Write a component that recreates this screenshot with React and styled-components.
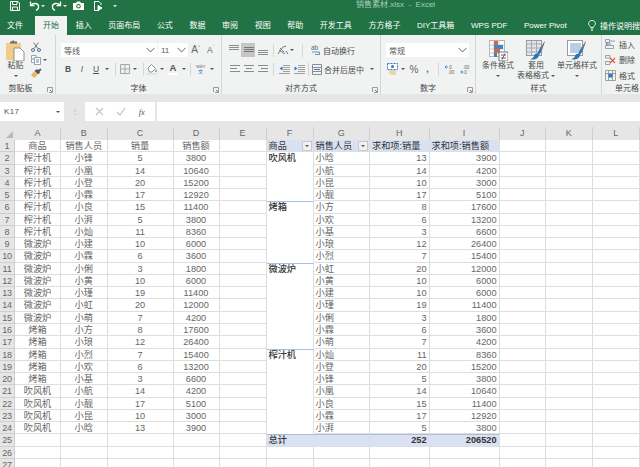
import React from "react";
import styled, { createGlobalStyle } from "styled-components";

const FONT = `"Liberation Sans", "Noto Sans CJK SC", sans-serif`;
const GREEN = "#217346";
const RIBBON = "#f0f3f2";

const GlobalStyle = createGlobalStyle`
  html, body { margin: 0; padding: 0; background: #fff; }
  body { font-family: ${FONT}; overflow: hidden; }
`;

const Page = styled.div`
  width: 640px;
  height: 467px;
  overflow: hidden;
  display: flex;
  flex-direction: column;
`;

const TitleBar = styled.div`
  height: 16px;
  background: ${GREEN};
  display: flex;
  align-items: flex-start;
  flex: none;
`;

const Qat = styled.div`
  width: 356px;
  height: 11px;
  display: flex;
  align-items: center;
  padding-left: 10px;
  box-sizing: border-box;
  flex: none;
`;

const QatSlot = styled.span`
  display: flex;
  align-items: center;
  width: ${(p) => p.$w}px;
  flex: none;
`;

const DocTitle = styled.div`
  font-size: 8px;
  line-height: 9px;
  color: #a9cdb9;
  white-space: pre;
`;

const TabBar = styled.div`
  height: 19px;
  background: ${GREEN};
  display: flex;
  flex: none;
  white-space: nowrap;
`;

const Tab = styled.div`
  padding: 0 8.3px;
  font-size: 8px;
  line-height: 19px;
  color: ${(p) => (p.$active ? GREEN : "#fff")};
  background: ${(p) => (p.$active ? RIBBON : "transparent")};
  flex: none;
  &:first-child {
    padding-left: 7px;
    margin-right: 3.5px;
  }
`;

const TellMe = styled.div`
  display: flex;
  align-items: center;
  gap: 4px;
  margin-left: 13px;
  font-size: 8px;
  color: #fff;
`;

const Ribbon = styled.div`
  height: 59px;
  background: ${RIBBON};
  display: flex;
  flex: none;
  color: #4a4a4a;
  font-size: 8px;
  overflow: hidden;
`;

const Group = styled.div`
  position: relative;
  width: ${(p) => p.$w}px;
  flex: none;
  box-sizing: border-box;
  border-right: 1px solid ${(p) => (p.$last ? "transparent" : "#d3d8d5")};
  display: flex;
  flex-direction: column;
`;

const GroupBody = styled.div`
  height: 49px;
  padding-left: ${(p) => p.$pad || 0}px;
  padding-top: ${(p) => p.$top ?? 8}px;
  box-sizing: border-box;
  display: flex;
  flex-direction: ${(p) => (p.$row ? "row" : "column")};
  gap: ${(p) => (p.$row ? 0 : 5)}px;
`;

const GroupLabel = styled.div`
  text-align: center;
  font-size: 8px;
  line-height: 10px;
  color: #444;
  white-space: nowrap;
`;

const Launcher = styled.svg`
  position: absolute;
  right: 2px;
  bottom: 1px;
`;

const ToolRow = styled.div`
  display: flex;
  align-items: center;
  height: 14px;
  white-space: nowrap;
`;

const Slot = styled.span`
  display: flex;
  align-items: center;
  justify-content: center;
  width: ${(p) => p.$w}px;
  height: 14px;
  flex: none;
  background: ${(p) => (p.$on ? "#c6c6c6" : "transparent")};
`;

const Caret = styled.i`
  display: block;
  width: 0;
  height: 0;
  border-left: 2px solid transparent;
  border-right: 2px solid transparent;
  border-top: 2px solid #555;
`;

const Sep = styled.i`
  display: block;
  width: 1px;
  height: 13px;
  background: #d3d8d5;
`;

const SelectBox = styled.div`
  width: ${(p) => p.$w}px;
  height: 14px;
  flex: none;
  background: #fff;
  box-sizing: border-box;
  padding: 0 2px 0 3px;
  display: flex;
  align-items: center;
  justify-content: space-between;
  font-size: 8px;
  color: #555;
  margin-right: ${(p) => p.$mr || 0}px;
`;

const WrapText = styled.span`
  font-size: 8px;
  margin-left: 1px;
`;

const PasteColumn = styled.div`
  width: 31px;
  display: flex;
  flex-direction: column;
  align-items: center;
  font-size: 8px;
  line-height: 10px;
`;

const PasteCaret = styled.span`
  display: flex;
  align-items: center;
  justify-content: center;
  height: 9px;
`;

const ClipTools = styled.div`
  display: flex;
  flex-direction: column;
  gap: 3px;
  padding-top: 2px;
`;

const ClipRow = styled.div`
  display: flex;
  align-items: center;
  height: 10px;
`;

const BigButton = styled.div`
  width: ${(p) => p.$w}px;
  flex: none;
  display: flex;
  flex-direction: column;
  align-items: center;
  font-size: 8px;
  line-height: 10px;
  white-space: nowrap;
`;

const BigIcon = styled.div`
  height: 21px;
`;

const InlineCaret = styled.span`
  display: inline-flex;
  align-items: center;
  justify-content: center;
  height: 10px;
  gap: 2px;
`;

const CellsList = styled.div`
  display: flex;
  flex-direction: column;
  gap: 1px;
  padding: 2px 0 0 3px;
`;

const CellsItem = styled.div`
  display: flex;
  align-items: center;
  height: 14.5px;
  gap: 3px;
  white-space: nowrap;
`;

const CellsLabel = styled(GroupLabel)`
  text-align: left;
  padding-left: 13px;
`;

const ClipLabel = styled(GroupLabel)`
  padding-right: 14px;
`;

const FormulaArea = styled.div`
  height: 33px;
  flex: none;
  background: #e6e6e6;
  display: flex;
  align-items: flex-start;
  padding-top: 8px;
  box-sizing: border-box;
`;

const NameBox = styled.div`
  width: 64px;
  height: 19px;
  background: #fff;
  box-sizing: border-box;
  padding: 0 4px;
  display: flex;
  align-items: center;
  justify-content: space-between;
  font-size: 8px;
  color: #555;
  letter-spacing: 0.3px;
`;

const Grip = styled.div`
  width: 21px;
  height: 19px;
  display: flex;
  align-items: center;
  justify-content: center;
  color: #a8a8a8;
  font-size: 8px;
  flex: none;
`;

const FxBox = styled.div`
  width: 70px;
  height: 19px;
  background: #fff;
  flex: none;
  display: flex;
  align-items: center;
  justify-content: space-around;
  padding: 0 4px;
  box-sizing: border-box;
  margin-right: 2px;
`;

const FxText = styled.span`
  font: italic 8.5px "Liberation Serif", serif;
  color: #555;
`;

const FormulaInput = styled.div`
  flex: 1;
  height: 19px;
  background: #fff;
`;

const Sheet = styled.div`
  display: grid;
  grid-template-columns: 15px 46px 46.5px 66px 46px 47px 47px 56.5px 59.5px 70px 46.5px 46.5px 47.5px;
  grid-template-rows: 13px;
  grid-auto-rows: 12.27px;
  flex: 1;
  font-size: 9.2px;
  color: #666;
  overflow: hidden;
`;

const Corner = styled.div`
  background: #e6e6e6;
  display: flex;
  align-items: flex-end;
  justify-content: flex-end;
  padding: 0 2px 2px 0;
  box-sizing: border-box;
`;

const ColHead = styled.div`
  background: #e6e6e6;
  border-right: 1px solid #cfcfcf;
  box-sizing: border-box;
  text-align: center;
  font-size: 9px;
  line-height: 13px;
  color: #666;
`;

const RowHead = styled.div`
  background: #e6e6e6;
  border-right: 1px solid #cfcfcf;
  border-bottom: 1px solid #cfcfcf;
  box-sizing: border-box;
  text-align: center;
  font-size: 9px;
  line-height: 12px;
  color: #666;
  letter-spacing: -0.2px;
`;

const Cell = styled.div`
  box-sizing: border-box;
  border-right: 1px solid #dcdfde;
  border-bottom: 1px solid ${(p) => (p.$noLine ? "transparent" : "#dcdfde")};
  border-top: ${(p) => (p.$groupTop ? "1px solid #a9bfe0" : "none")};
  background: ${(p) => (p.$fill ? "#d9e1f2" : "#fff")};
  text-align: ${(p) => p.$align || "center"};
  padding: 0 2px;
  line-height: ${(p) => (p.$groupTop ? 11 : 12)}px;
  white-space: nowrap;
  overflow: hidden;
  color: ${(p) => (p.$strong ? "#333" : "#666")};
  font-weight: ${(p) => p.$weight || 400};
  grid-column: ${(p) => (p.$span ? `span ${p.$span}` : "auto")};
  display: ${(p) => (p.$filter ? "flex" : "block")};
  justify-content: space-between;
  align-items: center;
`;

const FilterButton = styled.span`
  width: 10px;
  height: 10px;
  background: #f1f1f1;
  border: 1px solid #c9c9c9;
  box-sizing: border-box;
  display: flex;
  align-items: center;
  justify-content: center;
  flex: none;
  margin-right: -1px;
`;

const FontColor = styled.span`
  display: inline-block;
  font-size: 9.5px;
  line-height: 10px;
  font-weight: 700;
  color: #555;
  border-bottom: 2px solid #fff;
  padding: 0 2px;
`;

const BoldMark = styled.span`
  font-size: 8.5px;
  font-weight: ${(p) => (p.$b ? 700 : 400)};
  font-style: ${(p) => (p.$i ? "italic" : "normal")};
  text-decoration: ${(p) => (p.$u ? "underline" : "none")};
  color: #555;
`;

const GrowA = styled.span`
  font-size: ${(p) => p.$s}px;
  color: #666;
  line-height: 10px;
  display: flex;
  align-items: flex-start;
`;

const Tiny = styled.sup`
  font-size: 4px;
  line-height: 4px;
  color: #2b78c5;
`;

const WenIcon = styled.span`
  display: flex;
  flex-direction: column;
  align-items: center;
  font-size: 5px;
  line-height: 5.5px;
  color: #2b78c5;
`;

const WenTop = styled.span`
  color: #777;
`;

const Percent = styled.span`
  font-size: 10px;
  color: #666;
`;

const Comma = styled.span`
  font-size: 9px;
  font-weight: 700;
  color: #666;
`;

const Chevron = () => (
  <svg width="9" height="6" viewBox="0 0 9 6">
    <path d="M.5 .8 4.5 5 8.5 .8" fill="none" stroke="#666" />
  </svg>
);

const Corner4 = () => (
  <Launcher width="6" height="6" viewBox="0 0 6 6">
    <path d="M.5 5V.5H5.5V5.5H2" fill="none" stroke="#9a9a9a" />
    <path d="M3 3 5 5" stroke="#777" />
  </Launcher>
);

const Lines = ({ rows, color = "#8c8c8c", w = 11 }) => (
  <svg width={w} height="12" viewBox={`0 0 ${w} 12`}>
    {rows.map(([x1, x2, y], i) => (
      <path key={i} d={`M${x1} ${y}H${x2}`} stroke={color} />
    ))}
  </svg>
);

const Indent = ({ flip }) => (
  <svg width="11" height="10" viewBox="0 0 11 10">
    <path d="M4 1.5H11M4 3.5H11M4 5.5H11M4 7.5H11M0 9.5H11" stroke="#8c8c8c" strokeWidth=".8" />
    <path d={flip ? "M3.5 2.5V6.5L.5 4.5Z" : "M.5 2.5V6.5L3.5 4.5Z"} fill="#2b78c5" />
  </svg>
);

const Save = () => (
  <svg width="10" height="10" viewBox="0 0 10 10" fill="none" stroke="#fff">
    <path d="M.5 .5H8L9.5 2V9.5H.5Z" />
    <path d="M2.5 .5V3.5H7V.5M2.5 9.5V6H7.5V9.5" />
  </svg>
);

const Undo = ({ flip }) => (
  <svg width="11" height="10" viewBox="0 0 11 10" fill="none" stroke="#fff" strokeWidth="1.3">
    <g transform={flip ? "matrix(-1 0 0 1 11 0)" : undefined}>
      <path d="M1.5 .5V4.5H5.5" />
      <path d="M1.8 4.3C4 1.6 9.6 1.8 9.6 5.6 9.6 7.6 8.4 8.8 7 9.4" />
    </g>
  </svg>
);

const Camera = () => (
  <svg width="11" height="9" viewBox="0 0 11 9">
    <path d="M0 2H3L4 .5H7L8 2H11V9H0Z" fill="#fff" />
    <circle cx="5.5" cy="5.3" r="2.2" fill={GREEN} />
    <circle cx="5.5" cy="5.3" r="1.2" fill="#fff" />
  </svg>
);

const QatDoc = () => (
  <svg width="11" height="10" viewBox="0 0 11 10" fill="none" stroke="#fff">
    <path d="M6 9.5H1.5V.5H6L8 2.5V4" />
    <path d="M5 4.5 9 7 5 9.5Z" fill="#fff" />
  </svg>
);

const QatCaret = () => (
  <svg width="6" height="10" viewBox="0 0 6 10">
    <path d="M0 4H4L2 6.2Z" fill="#d8e8df" />
  </svg>
);

const Bulb = () => (
  <svg width="8" height="11" viewBox="0 0 8 11" fill="none" stroke="#fff" strokeWidth=".9">
    <path d="M2.6 7.5C2.4 6 .6 5.4 .6 3.5 .6 1.7 2.1.5 4 .5S7.4 1.7 7.4 3.5C7.4 5.4 5.6 6 5.4 7.5Z" />
    <path d="M2.8 9H5.2M3.2 10.4H4.8" />
  </svg>
);

const PasteIcon = () => (
  <svg width="19" height="21" viewBox="0 0 19 21">
    <rect x="0" y="3" width="15" height="17" fill="#f1cd8c" />
    <path d="M4 3V1.5H6L7 0 8.5 1.5H11V3.5H4Z" fill="#6e6e6e" />
    <path d="M8 8H14L18 12V21H8Z" fill="#fff" stroke="#777" strokeWidth=".8" />
  </svg>
);

const Scissors = () => (
  <svg width="10" height="10" viewBox="0 0 10 10" fill="none" stroke="#54718f">
    <circle cx="2" cy="8" r="1.5" />
    <circle cx="8" cy="8" r="1.5" />
    <path d="M3 6.6 7.5 .5M7 6.6 2.5 .5" stroke="#777" />
  </svg>
);

const CopyIcon = () => (
  <svg width="10" height="10" viewBox="0 0 10 10" fill="#fff" stroke="#8c8c8c" strokeWidth=".8">
    <path d="M.5 .5H5V7.5H.5Z" />
    <path d="M3.5 2.5H9.5V9.5H3.5Z" />
    <path d="M2 3V5M5 5H8M5 7H8" stroke="#2b78c5" />
  </svg>
);

const Brush = () => (
  <svg width="11" height="10" viewBox="0 0 11 10">
    <path d="M0 7 3 3.5 6.5 6.5 3.5 10 1.5 8.5Z" fill="#e7b766" />
    <path d="M3.5 3 6 1 7 2 9.5 .5 10.5 1.5 8.5 4 9 5 6.8 6.3Z" fill="#555" />
  </svg>
);

const BordersIcon = () => (
  <svg width="10" height="10" viewBox="0 0 10 10" fill="none" stroke="#a6a6a6">
    <path d="M.5 .5H9.5V9.5H.5ZM5 .5V9.5M.5 5H9.5" />
  </svg>
);

const FillIcon = () => (
  <svg width="12" height="12" viewBox="0 0 12 12">
    <path d="M2 5 5.5 1.5 9.5 5.5 6 9H3.5Z" fill="#fff" stroke="#777" strokeWidth=".8" />
    <path d="M10 6.5C11 8 11 9 10 9S9 8 10 6.5Z" fill="#2b78c5" />
    <rect x="0" y="10" width="11" height="2" fill="#e4e4e4" />
  </svg>
);

const OrientIcon = () => (
  <svg width="12" height="11" viewBox="0 0 12 11" fill="none" stroke="#777">
    <path d="M1 9 6 2 9 1M3 3 7 7M2 5 8 9" />
    <path d="M9 6 11 9" stroke="#2b78c5" />
  </svg>
);

const WrapIcon = () => (
  <svg width="10" height="12" viewBox="0 0 10 12" fill="none">
    <text x="0" y="6" fontSize="6.5" fill="#666" fontFamily="Liberation Sans">ab</text>
    <path d="M1 8H8.5V10.5H4" stroke="#2b78c5" strokeWidth=".8" />
  </svg>
);

const MergeIcon = () => (
  <svg width="10" height="11" viewBox="0 0 10 11" fill="none" stroke="#8c8c8c">
    <path d="M.5 .5H9.5V10.5H.5ZM.5 3.5H9.5M.5 7.5H9.5" />
    <path d="M2 5.5H8" stroke="#2b78c5" />
  </svg>
);

const CurrencyIcon = () => (
  <svg width="11" height="12" viewBox="0 0 11 12">
    <rect x=".5" y=".5" width="10" height="6" fill="#fff" stroke="#2b78c5" strokeDasharray="2 1" />
    <circle cx="5.5" cy="3.5" r="1.5" fill="#2b78c5" />
    <path d="M2 8H9M2 10H9M4 12H9" stroke="#e7b766" />
  </svg>
);

const DecimalIcon = ({ top, bottom, left }) => (
  <svg width="10" height="11" viewBox="0 0 10 11">
    <text x="3" y="4.6" fontSize="4.6" fill="#666" fontFamily="Liberation Sans">{top}</text>
    <text x="3" y="10" fontSize="4.6" fill="#666" fontFamily="Liberation Sans">{bottom}</text>
    <path d={left ? "M0 3H3M1.5 1.5 0 3 1.5 4.5" : "M0 8H3M1.5 6.5 3 8 1.5 9.5"} stroke="#2b78c5" fill="none" strokeWidth=".8" />
  </svg>
);

const CondIcon = () => (
  <svg width="19" height="21" viewBox="0 0 19 21">
    <rect x=".5" y=".5" width="15" height="16" fill="#fff" stroke="#b5b5b5" />
    <path d="M.5 5H15.5M.5 9H15.5M.5 13H15.5M5 .5V17M10 .5V17" stroke="#c9c9c9" />
    <rect x="5" y="1" width="4" height="4" fill="#d9673c" />
    <rect x="5" y="5" width="9" height="4" fill="#3f86c9" />
    <rect x="5" y="9" width="6" height="4" fill="#d9673c" />
    <rect x="5" y="13" width="3" height="4" fill="#3f86c9" />
    <rect x="10" y="12" width="9" height="9" fill="#fff" stroke="#777" />
    <path d="M12 15H17M12 18H17M16 13.5 13 19.5" stroke="#444" strokeWidth=".8" />
  </svg>
);

const TableIcon = () => (
  <svg width="20" height="21" viewBox="0 0 20 21">
    <rect x=".5" y=".5" width="15" height="15" fill="#dfe6f2" stroke="#9a9a9a" />
    <path d="M.5 4H15.5M.5 8H15.5M.5 12H15.5M5.5 .5V15.5M10.5 .5V15.5" stroke="#a9a9a9" />
    <path d="M19 1 13 10 11 14 9 14C8 17 6 19 4 19 7 20 12 20 13 15L15 12Z" fill="#2e75b6" />
    <path d="M19 1 14 8 16 10Z" fill="#777" />
  </svg>
);

const CellStyleIcon = () => (
  <svg width="20" height="21" viewBox="0 0 20 21">
    <rect x=".5" y=".5" width="15" height="15" fill="#fff" stroke="#9a9a9a" />
    <rect x="3" y="3" width="11" height="10" fill="#b9cde6" />
    <path d="M19 1 13 10 11 14 9 14C8 17 6 19 4 19 7 20 12 20 13 15L15 12Z" fill="#2e75b6" />
    <path d="M19 1 14 8 16 10Z" fill="#777" />
  </svg>
);

const InsertIcon = () => (
  <svg width="11" height="10" viewBox="0 0 11 10" fill="none" stroke="#8c8c8c" strokeWidth=".8">
    <path d="M.5 .5H4.5V3.5H.5ZM.5 6.5H8.5V9.5H.5ZM4.5 2H10" />
    <path d="M1 5H6M2.5 3.8 1 5 2.5 6.2" stroke="#2b78c5" />
  </svg>
);

const DeleteIcon = () => (
  <svg width="11" height="10" viewBox="0 0 11 10" fill="none" stroke="#8c8c8c" strokeWidth=".8">
    <path d="M.5 .5H5V3H.5ZM.5 6.5H5V9.5H.5Z" />
    <path d="M5 3 10 8M10 3 5 8" stroke="#d9573c" strokeWidth="1.1" />
  </svg>
);

const FormatIcon = () => (
  <svg width="11" height="11" viewBox="0 0 11 11" fill="none" stroke="#8c8c8c" strokeWidth=".8">
    <path d="M.5 .5H10.5V10.5H.5ZM3.5 .5V10.5M7.5 .5V10.5M.5 3.5H10.5" />
    <rect x="3.5" y="4" width="4" height="3.5" fill="#2b78c5" stroke="none" />
  </svg>
);

const TABS = ["文件", "开始", "插入", "页面布局", "公式", "数据", "审阅", "视图", "帮助", "开发工具", "方方格子", "DIY工具箱", "WPS PDF", "Power Pivot"];
const COLS = ["A", "B", "C", "D", "E", "F", "G", "H", "I", "J", "K", "L"];

const SALES = [
  ["榨汁机", "小锋", 5, 3800], ["榨汁机", "小凰", 14, 10640], ["榨汁机", "小登", 20, 15200], ["榨汁机", "小霖", 17, 12920],
  ["榨汁机", "小良", 15, 11400], ["榨汁机", "小湃", 5, 3800], ["榨汁机", "小灿", 11, 8360], ["微波炉", "小建", 10, 6000],
  ["微波炉", "小霖", 6, 3600], ["微波炉", "小俐", 3, 1800], ["微波炉", "小黄", 10, 6000], ["微波炉", "小瑾", 19, 11400],
  ["微波炉", "小虹", 20, 12000], ["微波炉", "小萌", 7, 4200], ["烤箱", "小方", 8, 17600], ["烤箱", "小琅", 12, 26400],
  ["烤箱", "小烈", 7, 15400], ["烤箱", "小欢", 6, 13200], ["烤箱", "小基", 3, 6600], ["吹风机", "小航", 14, 4200],
  ["吹风机", "小靓", 17, 5100], ["吹风机", "小昆", 10, 3000], ["吹风机", "小晗", 13, 3900],
];

const PIVOT = [
  ["吹风机", "小晗", 13, 3900], ["", "小航", 14, 4200], ["", "小昆", 10, 3000], ["", "小靓", 17, 5100],
  ["烤箱", "小方", 8, 17600], ["", "小欢", 6, 13200], ["", "小基", 3, 6600], ["", "小琅", 12, 26400], ["", "小烈", 7, 15400],
  ["微波炉", "小虹", 20, 12000], ["", "小黄", 10, 6000], ["", "小建", 10, 6000], ["", "小瑾", 19, 11400], ["", "小俐", 3, 1800], ["", "小霖", 6, 3600], ["", "小萌", 7, 4200],
  ["榨汁机", "小灿", 11, 8360], ["", "小登", 20, 15200], ["", "小锋", 5, 3800], ["", "小凰", 14, 10640], ["", "小良", 15, 11400], ["", "小霖", 17, 12920], ["", "小湃", 5, 3800],
];

const Filter = () => (
  <FilterButton>
    <Caret />
  </FilterButton>
);

const leftCells = (row) => {
  if (row === 1) return ["商品", "销售人员", "销量", "销售额"];
  return SALES[row - 2] || ["", "", "", ""];
};

const pivotCells = (row) => {
  if (row === 1) {
    return (
      <>
        <Cell $fill $strong $filter><span>商品</span><Filter /></Cell>
        <Cell $fill $strong $filter><span>销售人员</span><Filter /></Cell>
        <Cell $fill $strong $align="left">求和项:销量</Cell>
        <Cell $fill $strong $align="left">求和项:销售额</Cell>
      </>
    );
  }
  if (row === 25) {
    return (
      <>
        <Cell $fill $strong $weight={500} $align="left" $groupTop $span={2}>总计</Cell>
        <Cell $fill $strong $weight={700} $align="right" $groupTop>252</Cell>
        <Cell $fill $strong $weight={700} $align="right" $groupTop>206520</Cell>
      </>
    );
  }
  const item = PIVOT[row - 2];
  if (!item) {
    return (
      <>
        <Cell />
        <Cell />
        <Cell />
        <Cell />
      </>
    );
  }
  const starts = Boolean(item[0]) && row > 2;
  return (
    <>
      <Cell $align="left" $strong $weight={500} $noLine $groupTop={starts}>{item[0]}</Cell>
      <Cell $align="left">{item[1]}</Cell>
      <Cell $align="right">{item[2]}</Cell>
      <Cell $align="right">{item[3]}</Cell>
    </>
  );
};

const App = () => {
  const rows = Array.from({ length: 27 }, (_, i) => i + 1);
  return (
    <Page>
      <GlobalStyle />
      <TitleBar>
        <Qat>
          <QatSlot $w={19}><Save /></QatSlot>
          <QatSlot $w={12}><Undo /></QatSlot>
          <QatSlot $w={10}><QatCaret /></QatSlot>
          <QatSlot $w={12}><Undo flip /></QatSlot>
          <QatSlot $w={10}><QatCaret /></QatSlot>
          <QatSlot $w={20}><Camera /></QatSlot>
          <QatSlot $w={20}><QatDoc /></QatSlot>
          <QatSlot $w={6}><QatCaret /></QatSlot>
        </Qat>
        <DocTitle>销售素材.xlsx  -  Excel</DocTitle>
      </TitleBar>

      <TabBar>
        {TABS.map((t) => (
          <Tab key={t} $active={t === "开始"}>{t}</Tab>
        ))}
        <TellMe>
          <Bulb />
          操作说明搜索
        </TellMe>
      </TabBar>

      <Ribbon>
        <Group $w={56}>
          <GroupBody $row $top={5}>
            <PasteColumn>
              <PasteIcon />
              粘贴
              <PasteCaret><Caret /></PasteCaret>
            </PasteColumn>
            <ClipTools>
              <ClipRow><Scissors /></ClipRow>
              <ClipRow><CopyIcon /><Slot $w={8}><Caret /></Slot></ClipRow>
              <ClipRow><Brush /></ClipRow>
            </ClipTools>
          </GroupBody>
          <ClipLabel>剪贴板</ClipLabel>
          <Corner4 />
        </Group>

        <Group $w={166}>
          <GroupBody $pad={5}>
            <ToolRow>
              <SelectBox $w={96} $mr={1}>等线<Chevron /></SelectBox>
              <SelectBox $w={30}>11<Chevron /></SelectBox>
              <Slot $w={15}><GrowA $s={10}>A<Tiny>^</Tiny></GrowA></Slot>
              <Slot $w={15}><GrowA $s={8.5}>A<Tiny>ˇ</Tiny></GrowA></Slot>
            </ToolRow>
            <ToolRow>
              <Slot $w={14}><BoldMark $b>B</BoldMark></Slot>
              <Slot $w={14}><BoldMark $i>I</BoldMark></Slot>
              <Slot $w={14}><BoldMark $u>U</BoldMark></Slot>
              <Slot $w={8}><Caret /></Slot>
              <Slot $w={8}><Sep /></Slot>
              <Slot $w={11}><BordersIcon /></Slot>
              <Slot $w={10}><Caret /></Slot>
              <Slot $w={6}><Sep /></Slot>
              <Slot $w={12}><FillIcon /></Slot>
              <Slot $w={8}><Caret /></Slot>
              <Slot $w={14}><FontColor>A</FontColor></Slot>
              <Slot $w={7}><Caret /></Slot>
              <Slot $w={6}><Sep /></Slot>
              <Slot $w={15}><WenIcon><WenTop>wén</WenTop>文</WenIcon></Slot>
              <Slot $w={7}><Caret /></Slot>
            </ToolRow>
          </GroupBody>
          <GroupLabel>字体</GroupLabel>
          <Corner4 />
        </Group>

        <Group $w={159}>
          <GroupBody $pad={5}>
            <ToolRow>
              <Slot $w={14}><Lines rows={[[0, 10, 1.5], [0, 10, 3.5], [0, 10, 5.5]]} /></Slot>
              <Slot $w={14} $on><Lines rows={[[1, 11, 3.5], [1, 11, 5.5], [1, 11, 7.5]]} color="#777" /></Slot>
              <Slot $w={14}><Lines rows={[[1, 11, 6.5], [1, 11, 8.5], [1, 11, 10.5]]} /></Slot>
              <Slot $w={8}><Sep /></Slot>
              <Slot $w={12}><OrientIcon /></Slot>
              <Slot $w={6}><Caret /></Slot>
              <Slot $w={14}><Sep /></Slot>
              <Slot $w={13}><WrapIcon /></Slot>
              <WrapText>自动换行</WrapText>
            </ToolRow>
            <ToolRow>
              <Slot $w={14}><Lines rows={[[1, 11, 2.5], [1, 8, 5.5], [1, 11, 8.5]]} /></Slot>
              <Slot $w={14}><Lines rows={[[1, 11, 2.5], [3, 9, 5.5], [1, 11, 8.5]]} /></Slot>
              <Slot $w={14}><Lines rows={[[1, 11, 2.5], [4, 11, 5.5], [1, 11, 8.5]]} /></Slot>
              <Slot $w={8}><Sep /></Slot>
              <Slot $w={15}><Indent flip /></Slot>
              <Slot $w={15}><Indent /></Slot>
              <Slot $w={3}><Sep /></Slot>
              <Slot $w={13}><MergeIcon /></Slot>
              <WrapText>合并后居中</WrapText>
              <Slot $w={16}><Caret /></Slot>
            </ToolRow>
          </GroupBody>
          <GroupLabel>对齐方式</GroupLabel>
          <Corner4 />
        </Group>

        <Group $w={95}>
          <GroupBody $pad={5}>
            <ToolRow>
              <SelectBox $w={83}>常规<Chevron /></SelectBox>
            </ToolRow>
            <ToolRow>
              <Slot $w={13}><CurrencyIcon /></Slot>
              <Slot $w={8}><Caret /></Slot>
              <Slot $w={14}><Percent>%</Percent></Slot>
              <Slot $w={13}><Comma>,</Comma></Slot>
              <Slot $w={9}><Sep /></Slot>
              <Slot $w={14}><DecimalIcon top=".0" bottom=".00" left /></Slot>
              <Slot $w={15}><DecimalIcon top=".00" bottom=".0" /></Slot>
            </ToolRow>
          </GroupBody>
          <GroupLabel>数字</GroupLabel>
          <Corner4 />
        </Group>

        <Group $w={126}>
          <GroupBody $row $pad={4} $top={5}>
            <BigButton $w={36}>
              <BigIcon><CondIcon /></BigIcon>
              条件格式
              <InlineCaret><Caret /></InlineCaret>
            </BigButton>
            <BigButton $w={40}>
              <BigIcon><TableIcon /></BigIcon>
              套用
              <InlineCaret>表格格式<Caret /></InlineCaret>
            </BigButton>
            <BigButton $w={42}>
              <BigIcon><CellStyleIcon /></BigIcon>
              单元格样式
              <InlineCaret><Caret /></InlineCaret>
            </BigButton>
          </GroupBody>
          <GroupLabel>样式</GroupLabel>
        </Group>

        <Group $w={38} $last>
          <GroupBody $top={0}>
            <CellsList>
              <CellsItem><InsertIcon />插入</CellsItem>
              <CellsItem><DeleteIcon />删除</CellsItem>
              <CellsItem><FormatIcon />格式</CellsItem>
            </CellsList>
          </GroupBody>
          <CellsLabel>单元格</CellsLabel>
        </Group>
      </Ribbon>

      <FormulaArea>
        <NameBox>K17<Caret /></NameBox>
        <Grip>⋮</Grip>
        <FxBox>
          <svg width="9" height="9" viewBox="0 0 9 9"><path d="M1 1 8 8M8 1 1 8" stroke="#c4c4c4" strokeWidth="1.2" /></svg>
          <svg width="10" height="9" viewBox="0 0 10 9"><path d="M1 5 4 8 9 1" fill="none" stroke="#c4c4c4" strokeWidth="1.2" /></svg>
          <FxText>fx</FxText>
        </FxBox>
        <FormulaInput />
      </FormulaArea>

      <Sheet>
        <Corner>
          <svg width="7" height="7" viewBox="0 0 7 7"><path d="M7 0V7H0Z" fill="#b9b9b9" /></svg>
        </Corner>
        {COLS.map((c) => (
          <ColHead key={c}>{c}</ColHead>
        ))}
        {rows.map((r) => (
          <React.Fragment key={r}>
            <RowHead>{r}</RowHead>
            {leftCells(r).map((v, i) => (
              <Cell key={i}>{v}</Cell>
            ))}
            <Cell />
            {pivotCells(r)}
            <Cell />
            <Cell />
            <Cell />
          </React.Fragment>
        ))}
      </Sheet>
    </Page>
  );
};

export default App;
